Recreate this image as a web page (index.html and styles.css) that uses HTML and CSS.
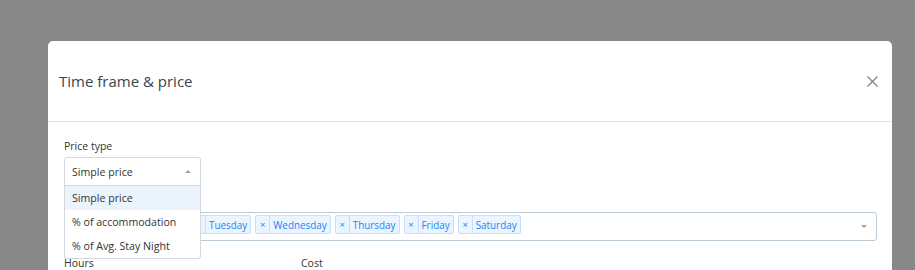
FILE: index.html
```html
<!DOCTYPE html>
<html lang="en">
<head>
<meta charset="utf-8">
<title>Time frame &amp; price</title>
<link rel="stylesheet" href="styles.css">
</head>
<body>
<div class="modal">
  <div class="modal-header">
    <h2 class="modal-title">Time frame &amp; price</h2>
    <button class="close" aria-label="Close">
      <svg width="11" height="11" viewBox="0 0 11 11"><path d="M0.5 0.5 L10.5 10.5 M10.5 0.5 L0.5 10.5" stroke="#7b8896" stroke-width="1.4" fill="none"/></svg>
    </button>
  </div>
  <div class="modal-body">
    <div class="field price-type">
      <label class="label">Price type</label>
      <div class="select-wrap">
        <div class="select is-open">
          <span class="select-value">Simple price</span>
          <span class="arrow-up"></span>
        </div>
        <div class="menu">
          <div class="option is-focused">Simple price</div>
          <div class="option">% of accommodation</div>
          <div class="option">% of Avg. Stay Night</div>
        </div>
      </div>
    </div>
    <div class="field">
      <div class="multi">
        <div class="tags">
          <span class="tag"><span class="tag-x">×</span><span class="tag-label">Tuesday</span></span>
          <span class="tag"><span class="tag-x">×</span><span class="tag-label">Wednesday</span></span>
          <span class="tag"><span class="tag-x">×</span><span class="tag-label">Thursday</span></span>
          <span class="tag"><span class="tag-x">×</span><span class="tag-label">Friday</span></span>
          <span class="tag"><span class="tag-x">×</span><span class="tag-label">Saturday</span></span>
        </div>
        <span class="arrow-down"></span>
      </div>
    </div>
    <div class="row">
      <label class="label">Hours</label>
      <label class="label">Cost</label>
    </div>
  </div>
</div>
</body>
</html>
```
FILE: styles.css
```css
html, body {
  margin: 0;
  padding: 0;
  background: #888888;
  font-family: "Open Sans", "Liberation Sans", sans-serif;
  overflow: hidden;
}
.modal {
  margin: 41px 0 0 48px;
  width: 844px;
  height: 260px;
  background: #ffffff;
  border-radius: 5px 5px 0 0;
}
.modal-header {
  height: 80px;
  display: flex;
  align-items: center;
  justify-content: space-between;
  padding: 0 14px 0 11px;
  border-bottom: 1px solid #e3e5ea;
}
.modal-title {
  margin: 0;
  font-size: 15px;
  font-weight: 400;
  color: #3b444d;
}
.close {
  border: 0;
  background: none;
  padding: 0;
  width: 11px;
  height: 11px;
  display: flex;
}
.modal-body {
  padding: 16px 15px 0 16px;
}
.label {
  display: block;
  font-size: 10.5px;
  line-height: 16px;
  color: #333;
}
.field { margin-bottom: 14px; }
.price-type { margin-bottom: 26px; }
.price-type .label { margin-bottom: 3px; }
.select-wrap {
  position: relative;
  width: 137px;
}
.select {
  height: 29px;
  box-sizing: border-box;
  border: 1px solid #d3d8de;
  border-radius: 3px 3px 0 0;
  display: flex;
  align-items: center;
  justify-content: space-between;
  padding: 0 9px 0 7px;
  font-size: 10.6px;
  color: #333;
}
.arrow-up {
  width: 0;
  height: 0;
  border-style: solid;
  border-width: 0 3px 3px;
  border-color: transparent transparent #a0a0a0;
}
.menu {
  position: absolute;
  top: 29px;
  left: 0;
  right: 0;
  background: #fff;
  border: 1px solid #d3d8de;
  border-top: 0;
  border-radius: 0 0 3px 3px;
  z-index: 2;
}
.option {
  height: 24px;
  line-height: 24px;
  padding: 0 7px;
  font-size: 10.6px;
  color: #333;
}
.option.is-focused { background: #ebf4fd; }
.multi {
  height: 29px;
  box-sizing: border-box;
  border: 1px solid #bccad6;
  border-radius: 3px;
  display: flex;
  align-items: flex-start;
  justify-content: space-between;
  padding: 2px 9px 0 0;
}
.tags {
  display: flex;
  gap: 4px;
  padding-left: 126px;
}
.tag {
  display: inline-flex;
  height: 19px;
  box-sizing: border-box;
  border: 1px solid #c2e0ff;
  background: #ebf5ff;
  color: #1a84f7;
  border-radius: 2px;
  font-size: 9.9px;
  line-height: 18px;
}
.tag-x {
  width: 13px;
  text-align: center;
  border-right: 1px solid #c2e0ff;
  font-size: 9.5px;
}
.tag-label { padding: 0 3px; }
.arrow-down {
  align-self: center;
  margin-top: -2px;
  width: 0;
  height: 0;
  border-style: solid;
  border-width: 3px 3px 0;
  border-color: #a0a0a0 transparent transparent;
}
.row {
  display: grid;
  grid-template-columns: 237px 1fr;
}
```
